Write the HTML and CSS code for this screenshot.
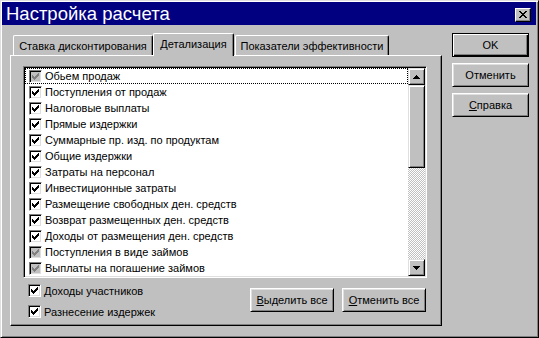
FILE: index.html
```html
<!DOCTYPE html>
<html lang="ru">
<head>
<meta charset="utf-8">
<title>Настройка расчета</title>
<link rel="stylesheet" href="styles.css">
</head>
<body>
<svg class="defs" width="0" height="0" aria-hidden="true">
  <defs>
    <path id="chk" d="M0 2h1v3H0zM1 3h1v3H1zM2 4h1v3H2zM3 3h1v3H3zM4 2h1v3H4zM5 1h1v3H5zM6 0h1v3H6z"/>
  </defs>
</svg>
<div class="window">
  <div class="titlebar">
    <span class="title">Настройка расчета</span>
    <span class="close">
      <svg width="8" height="7" viewBox="0 0 8 7" shape-rendering="crispEdges"><path d="M0 0h2v1H0zM6 0h2v1H6zM1 1h2v1H1zM5 1h2v1H5zM2 2h4v1H2zM3 3h2v1H3zM2 4h4v1H2zM1 5h2v1H1zM5 5h2v1H5zM0 6h2v1H0zM6 6h2v1H6z"/></svg>
    </span>
  </div>
  <div class="client">
    <div class="tabs-area">
      <div class="tabstrip">
        <div class="tab tab1">Ставка дисконтирования</div>
        <div class="tab tab2 active">Детализация</div>
        <div class="tab tab3">Показатели эффективности</div>
      </div>
      <div class="panel">
        <div class="listbox">
          <ul class="items">
            <li class="item focus"><span class="cb dis"><svg width="7" height="7" viewBox="0 0 7 7"><use href="#chk"/></svg></span>Обьем продаж</li>
            <li class="item"><span class="cb"><svg width="7" height="7" viewBox="0 0 7 7"><use href="#chk"/></svg></span>Поступления от продаж</li>
            <li class="item"><span class="cb"><svg width="7" height="7" viewBox="0 0 7 7"><use href="#chk"/></svg></span>Налоговые выплаты</li>
            <li class="item"><span class="cb"><svg width="7" height="7" viewBox="0 0 7 7"><use href="#chk"/></svg></span>Прямые издержки</li>
            <li class="item"><span class="cb"><svg width="7" height="7" viewBox="0 0 7 7"><use href="#chk"/></svg></span>Суммарные пр. изд. по продуктам</li>
            <li class="item"><span class="cb"><svg width="7" height="7" viewBox="0 0 7 7"><use href="#chk"/></svg></span>Общие издержки</li>
            <li class="item"><span class="cb"><svg width="7" height="7" viewBox="0 0 7 7"><use href="#chk"/></svg></span>Затраты на персонал</li>
            <li class="item"><span class="cb"><svg width="7" height="7" viewBox="0 0 7 7"><use href="#chk"/></svg></span>Инвестиционные затраты</li>
            <li class="item"><span class="cb"><svg width="7" height="7" viewBox="0 0 7 7"><use href="#chk"/></svg></span>Размещение свободных ден. средств</li>
            <li class="item"><span class="cb"><svg width="7" height="7" viewBox="0 0 7 7"><use href="#chk"/></svg></span>Возврат размещенных ден. средств</li>
            <li class="item"><span class="cb"><svg width="7" height="7" viewBox="0 0 7 7"><use href="#chk"/></svg></span>Доходы от размещения ден. средств</li>
            <li class="item"><span class="cb dis"><svg width="7" height="7" viewBox="0 0 7 7"><use href="#chk"/></svg></span>Поступления в виде займов</li>
            <li class="item"><span class="cb dis"><svg width="7" height="7" viewBox="0 0 7 7"><use href="#chk"/></svg></span>Выплаты на погашение займов</li>
          </ul>
          <div class="scrollbar">
            <div class="sb-btn"><svg width="7" height="4" viewBox="0 0 7 4" shape-rendering="crispEdges"><path d="M3 0h1v1H3zM2 1h3v1H2zM1 2h5v1H1zM0 3h7v1H0z"/></svg></div>
            <div class="thumb"></div>
            <div class="track"></div>
            <div class="sb-btn"><svg width="7" height="4" viewBox="0 0 7 4" shape-rendering="crispEdges"><path d="M0 0h7v1H0zM1 1h5v1H1zM2 2h3v1H2zM3 3h1v1H3z"/></svg></div>
          </div>
        </div>
        <div class="bottom">
          <div class="checks">
            <label class="check"><span class="cb"><svg width="7" height="7" viewBox="0 0 7 7"><use href="#chk"/></svg></span>Доходы участников</label>
            <label class="check"><span class="cb"><svg width="7" height="7" viewBox="0 0 7 7"><use href="#chk"/></svg></span>Разнесение издержек</label>
          </div>
          <div class="bbtns">
            <span class="btn wide"><u>В</u>ыделить все</span>
            <span class="btn wide"><u>О</u>тменить все</span>
          </div>
        </div>
      </div>
    </div>
    <div class="side">
      <span class="btn side-btn default">OK</span>
      <span class="btn side-btn">Отменить</span>
      <span class="btn side-btn"><u>С</u>правка</span>
    </div>
  </div>
</div>
</body>
</html>
```

FILE: styles.css
```css
* { box-sizing: border-box; }
html, body { margin: 0; padding: 0; background: #c0c0c0; }
body { font-family: "Liberation Sans", Arial, sans-serif; font-size: 11px; color: #000; }
.defs { position: absolute; width: 0; height: 0; }

.window {
  width: 539px;
  height: 338px;
  background: #c0c0c0;
  border: 1px solid;
  border-color: #dfdfdf #000 #000 #dfdfdf;
  box-shadow: inset 1px 1px #fff, inset -1px -1px #808080;
  padding: 1px 2px 1px 1px;
  display: flex;
  flex-direction: column;
}

.titlebar {
  height: 23px;
  background: #000080;
  display: flex;
  align-items: center;
  justify-content: space-between;
  padding: 0 5px 0 4px;
}
.title {
  color: #fff;
  font-size: 18.5px;
  line-height: 23px;
  white-space: nowrap;
}
.close {
  width: 16px;
  height: 14px;
  margin-top: 3px;
  background: #c0c0c0;
  border: 1px solid;
  border-color: #fff #000 #000 #fff;
  box-shadow: inset -1px -1px #808080;
  display: flex;
  align-items: center;
  justify-content: center;
  padding-bottom: 1px;
}
.close svg { fill: #000; }

.client {
  display: flex;
  padding: 8px 0 0 8px;
}

.tabs-area { width: 432px; display: flex; flex-direction: column; }
.tabstrip {
  height: 22px;
  display: flex;
  align-items: flex-end;
  padding-left: 3px;
}
.tab {
  height: 20px;
  display: flex;
  align-items: center;
  justify-content: center;
  white-space: nowrap;
  background: #c0c0c0;
  border-top: 1px solid #fff;
  border-left: 1px solid #fff;
  border-right: 1px solid #000;
  border-radius: 2px 2px 0 0;
  box-shadow: inset -1px 0 #808080;
}
.tab1 { width: 140px; }
.tab2 { width: 81px; }
.tab3 { width: 154px; margin-left: 1px; }
.tab.active {
  height: 23px;
  margin-bottom: -1px;
  position: relative;
  z-index: 1;
  padding-bottom: 2px;
}

.panel {
  height: 271px;
  border: 1px solid;
  border-color: #fff #000 #000 #fff;
  box-shadow: inset -1px -1px #808080;
  padding: 10px 0 0 12px;
}

.listbox {
  width: 404px;
  height: 212px;
  border: 1px solid;
  border-color: #808080 #fff #fff #808080;
  box-shadow: inset 1px 1px #000, inset -1px -1px #dfdfdf;
  padding: 1px;
  background: #fff;
  display: flex;
}
.items {
  list-style: none;
  margin: 0;
  padding: 0;
  width: 383px;
}
.item {
  height: 16px;
  display: flex;
  align-items: center;
  gap: 3px;
  padding-left: 4px;
  white-space: nowrap;
}
.item.focus { outline: 1px dotted #000; outline-offset: -1px; }

.cb {
  width: 13px;
  height: 13px;
  flex: none;
  background: #fff;
  color: #000;
  border: 1px solid;
  border-color: #808080 #fff #fff #808080;
  box-shadow: inset 1px 1px #000, inset -1px -1px #dfdfdf;
  display: flex;
  align-items: center;
  justify-content: center;
}
.cb svg { fill: currentColor; display: block; }
.cb.dis { background: #c0c0c0; color: #808080; }

.scrollbar {
  width: 17px;
  display: flex;
  flex-direction: column;
  background: repeating-conic-gradient(#c0c0c0 0 25%, #fff 0 50%) 0 0 / 2px 2px;
}
.sb-btn, .thumb {
  background: #c0c0c0;
  border: 1px solid;
  border-color: #dfdfdf #000 #000 #dfdfdf;
  box-shadow: inset 1px 1px #fff, inset -1px -1px #808080;
}
.sb-btn {
  height: 17px;
  display: flex;
  align-items: center;
  justify-content: center;
}
.sb-btn svg { fill: #000; }
.thumb { height: 83px; }
.track { flex: 1; }

.bottom {
  width: 404px;
  display: flex;
  justify-content: space-between;
  padding: 6px 1px 0 5px;
}
.checks { display: flex; flex-direction: column; gap: 8px; }
.check { display: flex; align-items: center; gap: 3px; height: 13px; white-space: nowrap; }
.bbtns { display: flex; gap: 8px; margin-top: 4px; }

.btn {
  height: 24px;
  display: flex;
  align-items: center;
  justify-content: center;
  background: #c0c0c0;
  border: 1px solid;
  border-color: #fff #000 #000 #fff;
  box-shadow: inset 1px 1px #dfdfdf, inset -1px -1px #808080;
  white-space: nowrap;
}
.btn u { text-decoration: underline; text-underline-offset: 1px; }
.wide { width: 84px; }

.side {
  margin-left: 10px;
  display: flex;
  flex-direction: column;
  gap: 6px;
}
.side-btn { width: 77px; }
.btn.default {
  border: 1px solid #000;
  box-shadow: inset 1px 1px #fff, inset -1px -1px #000, inset -2px -2px #808080;
}
```
